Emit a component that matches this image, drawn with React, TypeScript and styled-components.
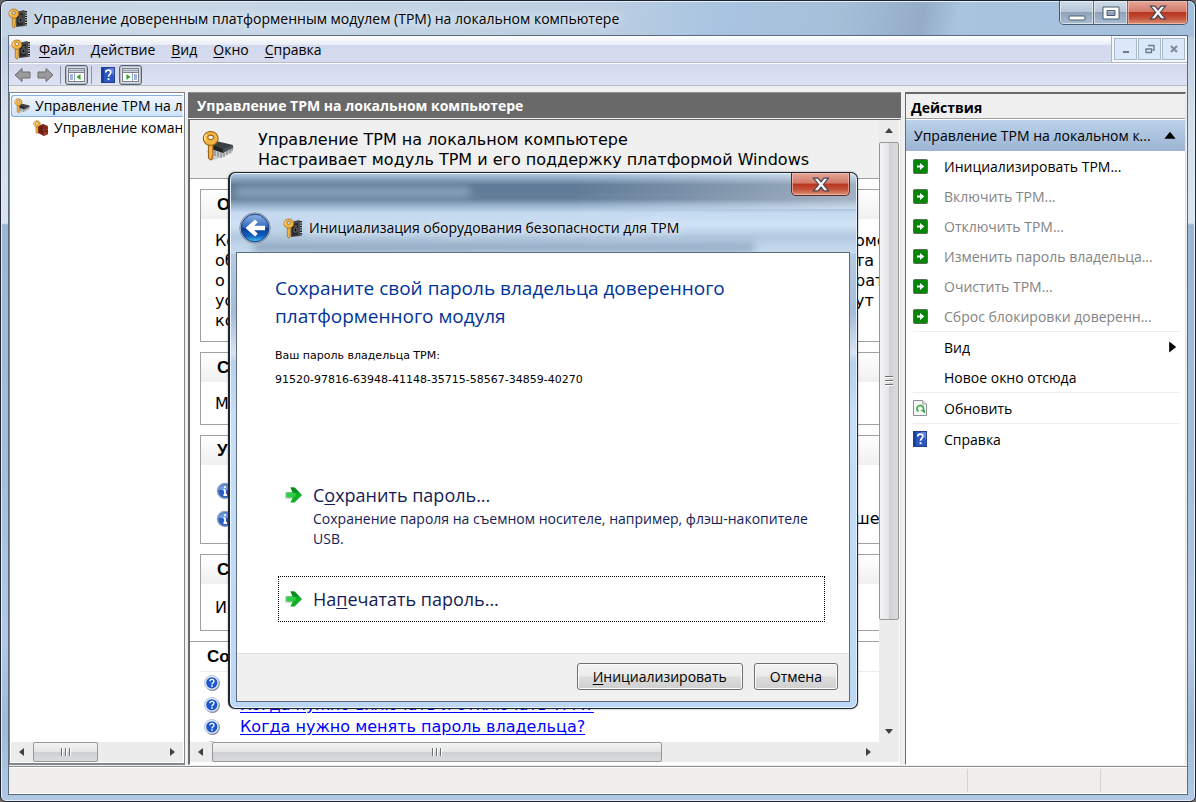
import React from 'react';
import styled, { createGlobalStyle, css } from 'styled-components';

const ui = '"Open Sans", "Noto Sans", sans-serif';
const wide = '"DejaVu Sans", sans-serif';

const GlobalStyle = createGlobalStyle`
  * { box-sizing: border-box; }
  body { margin: 0; background: #6b6866; font-family: ${ui}; font-size: 14px; color: #000; }
  button { font: inherit; color: inherit; margin: 0; padding: 0; border: 0; background: none; text-align: left; }
  ul, h1, h2, h3, p { margin: 0; padding: 0; font: inherit; list-style: none; }
  u { text-underline-offset: 2px; }
`;

/* ---------- main window ---------- */

const Window = styled.div`
  position: relative;
  display: flex;
  flex-direction: column;
  height: 100vh;
  min-height: 720px;
  padding: 0 7px 6px;
  border: 1px solid #1c2430;
  border-radius: 7px 7px 6px 6px;
  box-shadow: inset 0 0 0 1px #e4eef9;
  overflow: hidden;
  background:
    linear-gradient(100deg, #c3d3e3 0%, #c9d8e7 12%, #bccfe2 50%, #a9c4e1 60%, #a6bfd9 70%, #94acc8 77%, #a9c4df 80%, #a3bfdc 100%) 0 0 / 100% 36px no-repeat,
    linear-gradient(180deg, #b9cce0 35px, #d3ddec 110px, #dbe3f0 222px, #9cb6d4 224px, #a5bfdb 480px, #b4cae2 640px, #9fb9d6 720px, #b1c9e2 100%);
`;

const TitleBar = styled.header`
  display: flex;
  align-items: flex-start;
  height: 34px;
  flex: none;
`;

const TitleText = styled.h1`
  flex: 1;
  line-height: 36px;
  margin-left: 6px;
  white-space: nowrap;
  overflow: hidden;
  text-shadow: 0 0 8px #e6eef6, 0 0 8px #e6eef6;
`;

const TitleIcon = styled.span`
  display: flex;
  margin: 7px 0 0 0;
`;

const CaptionGroup = styled.div`
  display: flex;
  height: 24px;
  border: 1px solid #49596e;
  border-top: 0;
  border-radius: 0 0 5px 5px;
  overflow: hidden;
`;

const CaptionButton = styled.button<{ $kind?: 'close' }>`
  display: flex;
  align-items: center;
  justify-content: center;
  width: 34px;
  border-right: 1px solid #5c6d82;
  box-shadow: inset 0 0 0 1px rgba(255, 255, 255, 0.55);
  background: linear-gradient(#cfdbe8 0%, #b6c6d8 48%, #8ea2b9 50%, #a9bdd2 100%);
  ${(p) =>
    p.$kind === 'close' &&
    css`
      width: 59px;
      border-right: 0;
      box-shadow: inset 0 0 0 1px rgba(255, 200, 185, 0.6);
      background: linear-gradient(#e3a799 0%, #d27a69 46%, #b8341d 50%, #c4513a 75%, #db9578 100%);
    `}
`;

const Client = styled.div`
  display: flex;
  flex-direction: column;
  flex: 1;
  min-height: 0;
  border: 1px solid #5b6a7c;
  background: #f0f0f0;
`;

const MenuBar = styled.nav`
  display: flex;
  align-items: center;
  height: 27px;
  flex: none;
  padding-left: 2px;
  border-bottom: 1px solid #b5bac6;
  background: linear-gradient(#ffffff 0, #e7ecf6 9px, #d3d9ed 9px, #d6dbee 100%);
`;

const MenuList = styled.ul`
  display: flex;
  flex: 1;
  gap: 16px;
  margin-left: 8px;
  padding-top: 2px;
`;

const MenuButton = styled.button`
  line-height: 22px;
`;

const MdiGroup = styled.div`
  display: flex;
  gap: 1px;
  height: 26px;
  padding: 2px;
  border-left: 1px solid #aab3c2;
  background: #f4f7fc;
`;

const MdiButton = styled.button`
  display: flex;
  align-items: center;
  justify-content: center;
  width: 23px;
  border: 1px solid #a9b9cc;
  background: #dbe8f7;
`;

const ToolBar = styled.div`
  display: flex;
  align-items: center;
  height: 23px;
  flex: none;
  padding-left: 2px;
  border-top: 1px solid #fbfcfe;
  border-bottom: 1px solid #b7bdcb;
  background: linear-gradient(#d2d7eb, #dee3f4);
`;

const ToolButton = styled.button<{ $pressed?: boolean }>`
  display: flex;
  align-items: center;
  justify-content: center;
  width: 23px;
  height: 20px;
  ${(p) =>
    p.$pressed &&
    css`
      border: 1px solid #5b6472;
      border-radius: 3px;
      background: #dcdfe6;
      box-shadow: inset 0 0 0 1px #b4bac6;
    `}
`;

const ToolSeparator = styled.span`
  width: 1px;
  height: 18px;
  margin: 0 4px 0 3px;
  background: #8d94a3;
`;

const Panes = styled.div`
  display: grid;
  grid-template-columns: 176px minmax(0, 1fr) 281px;
  column-gap: 4px;
  flex: 1;
  min-height: 0;
  padding: 6px 1px 1px 0;
`;

/* ---------- tree ---------- */

const TreePane = styled.aside`
  display: flex;
  flex-direction: column;
  min-height: 0;
  border: 1px solid #828790;
  border-width: 1px 1px 2px;
  background: #fff;
  padding: 2px 1px 1px;
`;

const Tree = styled.ul`
  flex: 1;
  overflow: hidden;
`;

const TreeItem = styled.li<{ $selected?: boolean; $level?: number }>`
  display: flex;
  align-items: center;
  gap: 5px;
  height: 22px;
  padding-left: ${(p) => 2 + (p.$level || 0) * 19}px;
  line-height: 22px;
  white-space: nowrap;
  overflow: hidden;
  border: 1px solid transparent;
  ${(p) =>
    p.$selected &&
    css`
      border-color: #84acdd;
      border-right-color: transparent;
      border-radius: 3px 0 0 3px;
      background: linear-gradient(#f0f7fe, #cfe3f9);
    `}
  svg { flex: none; }
`;

/* ---------- scroll bars ---------- */

const Track = styled.div<{ $vertical?: boolean }>`
  display: flex;
  flex: none;
  flex-direction: ${(p) => (p.$vertical ? 'column' : 'row')};
  ${(p) => (p.$vertical ? 'width: 20px;' : 'height: 20px;')}
  background: #ececec;
`;

const ArrowButton = styled.button`
  display: flex;
  flex: 0 0 22px;
  align-items: center;
  justify-content: center;
  min-width: 20px;
  min-height: 20px;
`;

const Thumb = styled.div<{ $size: number; $vertical?: boolean }>`
  display: flex;
  align-items: center;
  justify-content: center;
  flex: ${(p) => p.$size} 1 0;
  border: 1px solid #979797;
  border-radius: 2px;
  background: linear-gradient(${(p) => (p.$vertical ? '90deg' : '180deg')}, #f4f4f4 0%, #e4e5e6 48%, #cfd0d3 52%, #dadbdd 100%);
`;

const TrackRest = styled.div<{ $size: number }>`
  flex: ${(p) => p.$size} 1 0;
`;

/* ---------- centre pane ---------- */

const CenterPane = styled.main`
  display: flex;
  flex-direction: column;
  min-height: 0;
  margin-left: -1px;
`;

const CenterTitle = styled.h2`
  flex: none;
  height: 26px;
  padding-left: 9px;
  line-height: 26px;
  border-top: 1px solid #8f8f8f;
  background: #696969;
  color: #fff;
  font-weight: 700;
`;

const Sunken = styled.div`
  display: flex;
  flex-direction: column;
  flex: 1;
  min-height: 0;
  margin-top: 1px;
  padding: 0 1px 2px 0;
  border: solid #696969;
  border-width: 1px 1px 1px 2px;
  border-right-color: #e3e3e3;
  border-bottom-color: #fff;
  background: #fff;
`;

const ScrollRow = styled.div`
  display: flex;
  flex: 1;
  min-height: 0;
`;

const ScrollBottom = styled.div`
  display: flex;
  flex: none;
  background: #ececec;
`;

const ScrollGrow = styled.div`
  flex: 1;
  min-width: 0;
`;

const ScrollCorner = styled.div`
  width: 20px;
`;

const Document = styled.div`
  flex: 1;
  min-width: 0;
  overflow: hidden;
  font-family: ${wide};
  font-size: 16px;
  line-height: 20px;
`;

const Intro = styled.div`
  display: flex;
  gap: 24px;
  height: 59px;
  padding: 10px 0 0 12px;
  border-bottom: 1px solid #a0a0a0;
  background: #f0f0f0;
  white-space: nowrap;
`;

const Sections = styled.div`
  display: flex;
  flex-direction: column;
  gap: 10px;
  margin-right: -20px;
  padding: 10px 0 10px 10px;
`;

const Section = styled.section`
  border: 1px solid #a0a0a0;
`;

const SectionTitle = styled.h3`
  height: 29px;
  padding-left: 16px;
  line-height: 29px;
  font-family: "Liberation Sans", sans-serif;
  font-size: 17px;
  font-weight: 700;
  background: linear-gradient(#ffffff, #f0f0f0);
`;

const SectionBody = styled.div<{ $tall?: boolean }>`
  padding: ${(p) => (p.$tall ? '14px 0 12px 14px' : '12px 0 10px 14px')};
`;

const SplitLine = styled.p`
  display: grid;
  grid-template-columns: minmax(0, 1fr) 43px;
`;

const NoteItem = styled(SplitLine)`
  grid-template-columns: 24px minmax(0, 1fr) 43px;
  align-items: center;
  height: 28px;
  svg { margin-left: 1px; }
`;

const LinksTitle = styled.h3`
  height: 30px;
  margin-left: 10px;
  padding-left: 7px;
  line-height: 30px;
  font-family: "Liberation Sans", sans-serif;
  font-size: 17px;
  font-weight: 700;
  border-bottom: 1px solid #ececec;
`;

const Links = styled.div`
  border-top: 1px solid #a0a0a0;
`;

const LinkRow = styled.li`
  display: flex;
  align-items: center;
  gap: 20px;
  height: 22px;
  padding-left: 14px;
  white-space: nowrap;
`;

const TopicLink = styled.a`
  color: #0000ff;
  text-decoration: underline;
  text-underline-offset: 2px;
`;

/* ---------- actions pane ---------- */

const ActionsPane = styled.aside`
  display: flex;
  flex-direction: column;
  overflow: hidden;
  border-top: 2px solid #696969;
  border-left: 1px solid #696969;
  border-right: 1px solid #e3e3e3;
  border-bottom: 1px solid #fff;
  background: #fff;
`;

const ActionsTitle = styled.h2`
  height: 25px;
  padding-left: 5px;
  line-height: 27px;
  font-weight: 700;
  border-bottom: 1px solid #a0a0a0;
  background: #f0f0f0;
`;

const ActionsGroup = styled.button`
  display: flex;
  align-items: center;
  justify-content: space-between;
  height: 31px;
  margin-top: 1px;
  padding: 0 8px;
  line-height: 32px;
  background: linear-gradient(#bad2ea, #9cb4d2);
  white-space: nowrap;
`;

const ActionItem = styled.li<{ $ruled?: boolean }>`
  margin: 0 6px 0 7px;
  border-top: ${(p) => (p.$ruled ? '1px solid #ececec' : '0')};
`;

const ActionButton = styled.button`
  display: grid;
  grid-template-columns: 31px 1fr auto;
  align-items: center;
  width: 100%;
  height: 30px;
  white-space: nowrap;
  &:disabled { color: #838383; }
`;

const ActionIcon = styled.span`
  display: flex;
`;

const StatusBar = styled.footer`
  display: flex;
  justify-content: flex-end;
  flex: none;
  height: 28px;
  border-top: 1px solid #8a8d92;
  box-shadow: inset 0 1px 0 #fff, inset 0 -1px 0 #fff;
  background: #f0eded;
`;

const StatusCell = styled.div<{ $w: number }>`
  width: ${(p) => p.$w}px;
  margin: 2px 0;
  border-left: 1px solid #d5d2d2;
`;

/* ---------- wizard dialog ---------- */

const Dialog = styled.div`
  position: absolute;
  left: 227px;
  top: 171px;
  display: flex;
  flex-direction: column;
  width: 630px;
  height: 537px;
  padding: 0 7px 6px 6px;
  border: 2px solid #20262e;
  border-width: 1px 1px 1px 2px;
  border-radius: 7px;
  box-shadow: inset 0 0 0 1px #e8f2fc, 0 0 2px #0006;
  overflow: hidden;
  background:
    linear-gradient(90deg, #fff0 55%, #ffffff66 100%) 0 0 / 100% 36px no-repeat,
    linear-gradient(180deg, #b8cfe8 0, #8ba5c1 6px, #5f7a96 12px, #667f9b 26px, #93aeca 32px, #c5dbf1 40px, #cfe1f4 52px, #b3c9e0 64px, #c9ddf0 80px, #fff0 81px),
    linear-gradient(180deg, #b5cbe3 80px, #a5bcd6 140px, #d8e4f1 180px, #b7d0eb 190px, #c6def7 240px, #bcd8f6 100%);
`;

const Haze = styled.div`
  position: absolute;
  inset: 8px 40px auto 4px;
  height: 76px;
  filter: blur(4px);
  opacity: 0.7;
  background:
    linear-gradient(90deg, #9db5cf, #9db5cf) 2px 6px / 234px 10px no-repeat,
    linear-gradient(90deg, #7089a5, #7d96b1) 20px 62px / 500px 9px no-repeat,
    linear-gradient(90deg, #b5cbe2, #b5cbe2) 20px 40px / 372px 9px no-repeat;
`;

const DialogTop = styled.div`
  display: flex;
  position: relative;
  justify-content: flex-end;
  height: 23px;
  flex: none;
`;

const DialogClose = styled(CaptionButton)`
  height: 23px;
  border: 1px solid #5a2a25;
  border-top: 0;
  border-radius: 0 0 5px 5px;
`;

const DialogHead = styled.div`
  display: flex;
  position: relative;
  align-items: center;
  height: 56px;
  padding: 12px 0 4px 3px;
  flex: none;
`;

const BackButton = styled.button`
  display: flex;
  margin-right: 12px;
`;

const DialogName = styled.h2`
  margin-left: 6px;
  line-height: 24px;
  text-shadow: 0 0 8px #e4eefa, 0 0 8px #e4eefa;
`;

const DialogSheet = styled.div`
  display: flex;
  position: relative;
  flex-direction: column;
  flex: 1;
  border: 1px solid #5b6a7c;
  background: #fff;
`;

const DialogBody = styled.div`
  display: flex;
  flex-direction: column;
  flex: 1;
  padding: 21px 24px 31px 38px;
`;

const DialogHeading = styled.h3`
  max-width: 480px;
  margin-bottom: 14px;
  color: #003399;
  font-size: 19px;
  line-height: 28px;
`;

const PasswordLine = styled.p`
  font-family: ${wide};
  font-size: 11px;
  line-height: 24px;
`;

const Commands = styled.div`
  display: flex;
  flex-direction: column;
  gap: 18px;
  margin: auto 0 0 3px;
`;

const CommandLink = styled.button<{ $focused?: boolean }>`
  display: grid;
  grid-template-columns: 28px 1fr;
  padding: 8px 3px 8px 6px;
  border: 1px ${(p) => (p.$focused ? 'dotted #000' : 'solid transparent')};
  color: #151c55;
  line-height: 20px;
  svg { margin-top: 5px; }
`;

const CommandTitle = styled.span`
  display: block;
  font-size: 18px;
  line-height: 28px;
`;

const DialogFooter = styled.div`
  display: flex;
  justify-content: flex-end;
  gap: 11px;
  height: 48px;
  padding: 9px 11px 0 0;
  border-top: 1px solid #dfdfdf;
  background: #f0f0f0;
`;

const PushButton = styled.button`
  height: 27px;
  padding: 0 15px;
  border: 1px solid #707070;
  border-radius: 3px;
  box-shadow: inset 0 0 0 1px #fbfbfb;
  background: linear-gradient(#f2f2f2 0%, #ebebeb 48%, #dddddd 52%, #cfcfcf 100%);
  text-align: center;
`;

/* ---------- drawings ---------- */

const KeyShape = () => (
  <g stroke="#9a6212" strokeWidth="0.7" fill="#f2b544">
    <path d="M4.3 9.5h3V17l-.8.9.8 1-1.4 1.1-1.6-1.3z" />
    <path fillRule="evenodd" d="M5.8 1a4.9 4.6 0 1 0 .01 0zM5.8 3.4a1.9 1.5 0 1 1-.01 0z" />
    <path d="M3 2.9c-1.2 1-1.3 3-.6 4.2" fill="none" stroke="#ffe6a4" strokeWidth="1" />
  </g>
);

const KeyDevice = () => (
  <svg width="20" height="21" viewBox="0 0 20 21">
    <path d="M8 4l8-2 1 1v15l-9 1z" fill="#4a4a4a" />
    <path d="M9 6l6-1v12l-6 1z" fill="#292929" />
    <path d="M18 3v15" stroke="#1c1c1c" strokeWidth="2" strokeDasharray="1.4 1" />
    <path d="M11 8h3M11 10h3v4h-3z" stroke="#6f6f6f" fill="#111" />
    <KeyShape />
  </svg>
);

const KeyChip = ({ size = 16 }: { size?: number }) => (
  <svg width={size} height={size} viewBox="0 0 32 32">
    <path d="M4 21l8 9 18-7 2-6z" fill="#b5b5b5" opacity=".55" />
    <path d="M9 14l5-3 17 4-10 8z" fill="#3c3f42" />
    <path d="M9 14l12 5v4L9 19z" fill="#202224" />
    <path d="M21 19l10-4v3l-10 5z" fill="#4c5054" />
    <path d="M10 19v5m3-4v6m3-5v6m3-5v6m3-5v4m3-6v4m3-6v4m2-5v3" stroke="#85898c" strokeWidth="1.3" />
    <g transform="scale(1.5)"><KeyShape /></g>
  </svg>
);

const KeyCommand = () => (
  <svg width="16" height="16" viewBox="0 0 16 16">
    <path d="M5 6l5-2 5 2v8l-4 2-6-3z" fill="#7d2218" />
    <path d="M10 7l5-1v8l-5 2z" fill="#a83b2b" />
    <path d="M6 8h9M6 11h9M8 7v3m4-3v3m-2 1v4m4-5v4" stroke="#4c120c" strokeWidth=".7" />
    <g transform="scale(.68)"><KeyShape /></g>
  </svg>
);

const CrossGlyph = ({ s = 18 }: { s?: number }) => (
  <svg width={s} height={s - 3} viewBox="0 0 16 14">
    <path d="M1 1h4.2L8 4.400 10.800 1H15l-4.800 6L15 13h-4.200L8 9.600 5.200 13H1l4.800-6z" fill="#f4f4f6" stroke="#4b4550" strokeWidth="1.100" />
  </svg>
);

const ToolArrow = ({ flip }: { flip?: boolean }) => (
  <svg width="17" height="16" viewBox="0 0 17 16">
    <path transform={flip ? 'translate(17 0) scale(-1 1)' : undefined} d="M1 8l7-6.500V5h8v6H8v3.500z" fill="#9a9a9a" stroke="#6c6c6c" />
  </svg>
);

const PaneGlyph = ({ flip }: { flip?: boolean }) => (
  <svg width="17" height="14" viewBox="0 0 17 14">
    <rect x=".5" y=".5" width="16" height="13" fill="#fff" stroke="#7b808a" />
    <path d="M1 2.500h15" stroke="#9aa3b3" strokeWidth="2" />
    <path d="M1 4.500h15" stroke="#7b808a" />
    <g transform={flip ? 'translate(17 0) scale(-1 1)' : undefined}>
      <path d="M6.500 5v8" stroke="#9aa3b3" />
      <path d="M2 7h3M2 9h3M2 11h3" stroke="#3d6fc4" />
      <path d="M12.500 6v6L8.500 9z" fill="#2fa32f" />
    </g>
  </svg>
);

const HelpBook = () => (
  <svg width="14" height="16" viewBox="0 0 14 16">
    <rect x=".5" y=".5" width="13" height="15" fill="#2c56c0" stroke="#27408e" />
    <path d="M1 1h2v14H1z" fill="#1f3f98" />
    <path d="M8 1h5v8z" fill="#5f86dc" />
    <path d="M4.800 5.400c0-3 5-3 5 0 0 2-2.300 2-2.300 4.400" fill="none" stroke="#fff" strokeWidth="1.700" />
    <rect x="6.600" y="11.200" width="1.900" height="1.900" fill="#fff" />
  </svg>
);

const GoBadge = () => (
  <svg width="15" height="15" viewBox="0 0 15 15">
    <rect x=".5" y=".5" width="14" height="14" rx="1" fill="#068506" stroke="#5d6b5d" />
    <path d="M4 6.500h3V4l4.300 3.500L7 11V8.500H4z" fill="#fff" />
  </svg>
);

const RefreshPage = () => (
  <svg width="14" height="16" viewBox="0 0 14 16">
    <path d="M.5.5h9l4 3.500v11.500H.5z" fill="#f8f8f8" stroke="#8f8f8f" />
    <path d="M9.500.5V4h4" fill="#ddd" stroke="#aaa" />
    <path d="M5.500 11.500A3.300 3.300 0 1 1 10 10.500" fill="none" stroke="#3fae49" strokeWidth="1.700" />
    <path d="M7.200 10h4.800v3.500z" fill="#3fae49" />
  </svg>
);

const InfoBall = () => (
  <svg width="18" height="18" viewBox="0 0 18 18">
    <circle cx="9" cy="9" r="7.500" fill="#2a5ec4" stroke="#8fa3c4" strokeWidth="1.500" />
    <path d="M3 8a6 5 0 0 1 12 0z" fill="#6f9be6" />
    <path d="M9 8v5M7.500 8H9m-1.500 5h3.500M9 4.200v1.800" stroke="#fff" strokeWidth="1.800" />
  </svg>
);

const QuestionBall = () => (
  <svg width="16" height="16" viewBox="0 0 16 16">
    <circle cx="8.500" cy="8.500" r="7.400" fill="#7d8694" />
    <circle cx="7.700" cy="7.700" r="7.200" fill="#e3ecfa" stroke="#a9b8d0" strokeWidth=".8" />
    <circle cx="7.800" cy="7.800" r="5.600" fill="#1d56cf" />
    <path d="M5.900 6.300c0-2.600 4-2.600 4 0 0 1.500-1.900 1.500-1.900 3.100" fill="none" stroke="#fff" strokeWidth="1.400" />
    <rect x="7.200" y="10.300" width="1.600" height="1.500" fill="#fff" />
  </svg>
);

const BackBall = () => (
  <svg width="32" height="32" viewBox="0 0 32 32">
    <defs>
      <linearGradient id="ball" x1="0" y1="0" x2="0" y2="1">
        <stop offset="0" stopColor="#8fb4e6" />
        <stop offset=".48" stopColor="#2f66bd" />
        <stop offset=".52" stopColor="#0b3a96" />
        <stop offset=".8" stopColor="#1263c4" />
        <stop offset="1" stopColor="#45cdf8" />
      </linearGradient>
    </defs>
    <circle cx="16" cy="16" r="15.300" fill="#aab9cc" stroke="#8496ad" />
    <circle cx="16" cy="16" r="13.800" fill="url(#ball)" stroke="#1c3f80" />
    <path d="M6.500 16l9.500-8.500 2.800 2.800-3.600 3.500H26v4.400H15.200l3.600 3.500-2.800 2.800z" fill="#fff" />
  </svg>
);

const GreenArrow = () => (
  <svg width="18" height="18" viewBox="0 0 18 18">
    <path d="M0 6h7.500V1L17 9.500 8 17.500V13H0z" fill="#000" opacity=".14" />
    <path d="M1.500 6.500h6.300L5.500 1.500h4L17 9l-7.500 7.500h-4l2.300-5H1.500z" fill="#0fae26" />
    <path d="M7.800 6.500L5.500 1.500h4l5 5z" fill="#0a8d1c" />
    <path d="M1.500 7h9v4h-9z" fill="#2bd043" />
  </svg>
);

const arrowPaths = { left: 'M7 1v8L2 5z', right: 'M3 1v8l5-4z', up: 'M1 7h8L5 2z', down: 'M1 3h8L5 8z' };

const Arrow = ({ dir, size = 10, color = '#404040' }: { dir: keyof typeof arrowPaths; size?: number; color?: string }) => (
  <svg width={size} height={size} viewBox="0 0 10 10">
    <path d={arrowPaths[dir]} fill={color} />
  </svg>
);

const Grip = ({ vertical }: { vertical?: boolean }) => (
  <svg width="12" height="12" viewBox="0 0 12 12">
    <g transform={vertical ? 'rotate(90 6 6)' : undefined}>
      <path d="M1.500 2v8M5.500 2v8M9.500 2v8" stroke="#6d7073" />
      <path d="M2.500 2v8M6.500 2v8M10.500 2v8" stroke="#fff" />
    </g>
  </svg>
);

function ScrollBar({ vertical, thumb, rest }: { vertical?: boolean; thumb: number; rest: number }) {
  return (
    <Track $vertical={vertical}>
      <ArrowButton aria-label="Назад"><Arrow dir={vertical ? 'up' : 'left'} /></ArrowButton>
      <Thumb $size={thumb} $vertical={vertical}><Grip vertical={vertical} /></Thumb>
      <TrackRest $size={rest} />
      <ArrowButton aria-label="Вперёд"><Arrow dir={vertical ? 'down' : 'right'} /></ArrowButton>
    </Track>
  );
}

/* ---------- data ---------- */

const menus = [['Ф', 'айл'], ['Д', 'ействие'], ['В', 'ид'], ['О', 'кно'], ['С', 'правка']];

const overview = [['Ком', 'оме'], ['обо', 'та с'], ['о', 'рат'], ['уст', 'ут п'], ['ком', '']];

const topics = ['', 'Когда нужно включать и отключать TPM?', 'Когда нужно менять пароль владельца?', ''];

type Action = { label: string; icon?: React.ReactNode; disabled?: boolean; ruled?: boolean; submenu?: boolean };

const actions: Action[] = [
  { label: 'Инициализировать TPM...', icon: <GoBadge /> },
  { label: 'Включить TPM...', icon: <GoBadge />, disabled: true },
  { label: 'Отключить TPM...', icon: <GoBadge />, disabled: true },
  { label: 'Изменить пароль владельца...', icon: <GoBadge />, disabled: true },
  { label: 'Очистить TPM...', icon: <GoBadge />, disabled: true },
  { label: 'Сброс блокировки доверенн...', icon: <GoBadge />, disabled: true },
  { label: 'Вид', ruled: true, submenu: true },
  { label: 'Новое окно отсюда' },
  { label: 'Обновить', icon: <RefreshPage />, ruled: true },
  { label: 'Справка', icon: <HelpBook />, ruled: true },
];

function Wizard() {
  return (
    <Dialog role="dialog" aria-labelledby="wizard-name">
      <Haze />
      <DialogTop>
        <DialogClose $kind="close" aria-label="Закрыть"><CrossGlyph /></DialogClose>
      </DialogTop>
      <DialogHead>
        <BackButton aria-label="Назад"><BackBall /></BackButton>
        <KeyDevice />
        <DialogName id="wizard-name">Инициализация оборудования безопасности для TPM</DialogName>
      </DialogHead>
      <DialogSheet>
        <DialogBody>
          <DialogHeading>Сохраните свой пароль владельца доверенного платформенного модуля</DialogHeading>
          <PasswordLine>Ваш пароль владельца TPM:</PasswordLine>
          <PasswordLine>91520-97816-63948-41148-35715-58567-34859-40270</PasswordLine>
          <Commands>
            <CommandLink>
              <GreenArrow />
              <span>
                <CommandTitle>С<u>о</u>хранить пароль...</CommandTitle>
                Сохранение пароля на съемном носителе, например, флэш-накопителе USB.
              </span>
            </CommandLink>
            <CommandLink $focused>
              <GreenArrow />
              <CommandTitle>На<u>п</u>ечатать пароль...</CommandTitle>
            </CommandLink>
          </Commands>
        </DialogBody>
        <DialogFooter>
          <PushButton><u>И</u>нициализировать</PushButton>
          <PushButton>Отмена</PushButton>
        </DialogFooter>
      </DialogSheet>
    </Dialog>
  );
}

export default function App() {
  return (
    <>
      <GlobalStyle />
      <Window>
        <TitleBar>
          <TitleIcon><KeyDevice /></TitleIcon>
          <TitleText>Управление доверенным платформенным модулем (TPM) на локальном компьютере</TitleText>
          <CaptionGroup>
            <CaptionButton aria-label="Свернуть">
              <svg width="18" height="18" viewBox="0 0 18 18"><rect x="1" y="12" width="16" height="4" rx="1" fill="#fff" stroke="#4b5a6b" /></svg>
            </CaptionButton>
            <CaptionButton aria-label="Развернуть">
              <svg width="18" height="14" viewBox="0 0 18 14"><path fillRule="evenodd" d="M1 1h16v12H1zM5 4.500h8v5H5z" fill="#fff" stroke="#4b5a6b" /></svg>
            </CaptionButton>
            <CaptionButton $kind="close" aria-label="Закрыть"><CrossGlyph /></CaptionButton>
          </CaptionGroup>
        </TitleBar>
        <Client>
          <MenuBar>
            <KeyDevice />
            <MenuList>
              {menus.map(([key, rest]) => (
                <li key={rest}><MenuButton><u>{key}</u>{rest}</MenuButton></li>
              ))}
            </MenuList>
            <MdiGroup>
              <MdiButton aria-label="Свернуть">
                <svg width="10" height="10"><path d="M2 8h6" stroke="#6b7a8c" strokeWidth="2" /></svg>
              </MdiButton>
              <MdiButton aria-label="Восстановить">
                <svg width="10" height="10"><path d="M3 1.500h6V6H7.500M1 5h5.500v3.500H1z" fill="none" stroke="#6b7a8c" strokeWidth="1.300" /></svg>
              </MdiButton>
              <MdiButton aria-label="Закрыть">
                <svg width="10" height="10"><path d="M2 2l6 6M8 2L2 8" stroke="#7d8a9a" strokeWidth="2" /></svg>
              </MdiButton>
            </MdiGroup>
          </MenuBar>
          <ToolBar>
            <ToolButton aria-label="Назад"><ToolArrow /></ToolButton>
            <ToolButton aria-label="Вперёд"><ToolArrow flip /></ToolButton>
            <ToolSeparator />
            <ToolButton $pressed aria-label="Дерево консоли"><PaneGlyph /></ToolButton>
            <ToolSeparator />
            <ToolButton aria-label="Справка"><HelpBook /></ToolButton>
            <ToolButton $pressed aria-label="Панель действий"><PaneGlyph flip /></ToolButton>
          </ToolBar>
          <Panes>
            <TreePane>
              <Tree>
                <TreeItem $selected><KeyChip />Управление TPM на л</TreeItem>
                <TreeItem $level={1}><KeyCommand />Управление коман</TreeItem>
              </Tree>
              <ScrollBar thumb={64} rest={64} />
            </TreePane>
            <CenterPane>
              <CenterTitle>Управление TPM на локальном компьютере</CenterTitle>
              <Sunken>
                <ScrollRow>
                  <Document>
                    <Intro>
                      <KeyChip size={32} />
                      <p>Управление TPM на локальном компьютере<br />Настраивает модуль TPM и его поддержку платформой Windows</p>
                    </Intro>
                    <Sections>
                      <Section>
                        <SectionTitle>Обзор</SectionTitle>
                        <SectionBody>
                          {overview.map(([start, end]) => (
                            <SplitLine key={start}><span>{start}</span><span>{end}</span></SplitLine>
                          ))}
                        </SectionBody>
                      </Section>
                      <Section>
                        <SectionTitle>Сост</SectionTitle>
                        <SectionBody><p>Мод</p></SectionBody>
                      </Section>
                      <Section>
                        <SectionTitle>Упр</SectionTitle>
                        <SectionBody>
                          <NoteItem><InfoBall /></NoteItem>
                          <NoteItem><InfoBall /><span /><span>ше</span></NoteItem>
                        </SectionBody>
                      </Section>
                      <Section>
                        <SectionTitle>Свед</SectionTitle>
                        <SectionBody $tall><p>Имя</p></SectionBody>
                      </Section>
                    </Sections>
                    <Links>
                      <LinksTitle>Содер</LinksTitle>
                      <ul>
                        {topics.map((topic, i) => (
                          <LinkRow key={i}>
                            <QuestionBall />
                            {topic && <TopicLink href="#">{topic}</TopicLink>}
                          </LinkRow>
                        ))}
                      </ul>
                    </Links>
                  </Document>
                  <ScrollBar vertical thumb={478} rest={100} />
                </ScrollRow>
                <ScrollBottom>
                  <ScrollGrow><ScrollBar thumb={449} rest={195} /></ScrollGrow>
                  <ScrollCorner />
                </ScrollBottom>
              </Sunken>
            </CenterPane>
            <ActionsPane>
              <ActionsTitle>Действия</ActionsTitle>
              <ActionsGroup>Управление TPM на локальном к...<Arrow dir="up" size={14} color="#000" /></ActionsGroup>
              <ul>
                {actions.map((a) => (
                  <ActionItem key={a.label} $ruled={a.ruled}>
                    <ActionButton disabled={a.disabled}>
                      <ActionIcon>{a.icon}</ActionIcon>
                      <span>{a.label}</span>
                      {a.submenu && <Arrow dir="right" size={14} color="#000" />}
                    </ActionButton>
                  </ActionItem>
                ))}
              </ul>
            </ActionsPane>
          </Panes>
          <StatusBar>
            <StatusCell $w={133} />
            <StatusCell $w={87} />
          </StatusBar>
        </Client>
        <Wizard />
      </Window>
    </>
  );
}
